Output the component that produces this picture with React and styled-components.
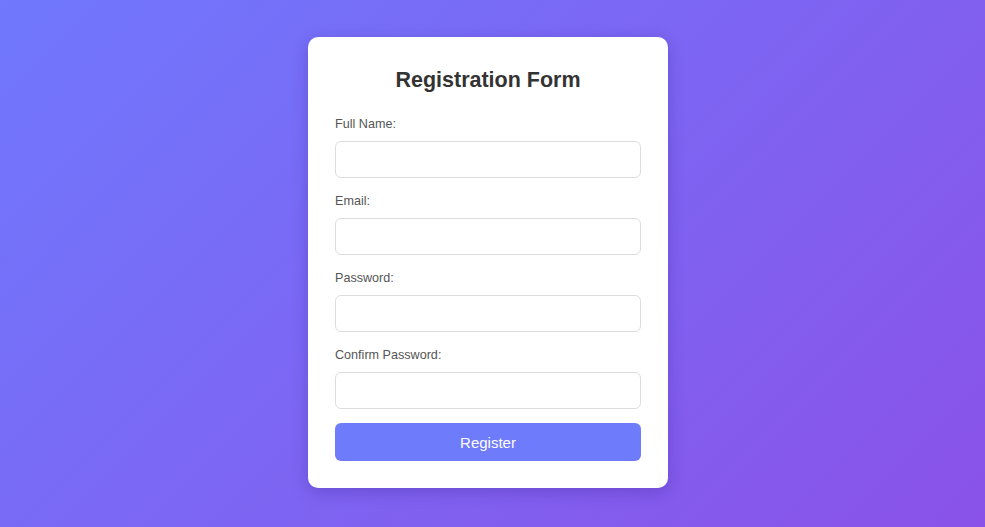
import styled, { createGlobalStyle } from "styled-components"

const GlobalStyle = createGlobalStyle`
  * {
    box-sizing: border-box;
  }
  body {
    margin: 0;
    font-family: "Liberation Sans", Arial, sans-serif;
  }
`

const Page = styled.div`
  min-height: 527px;
  background: linear-gradient(135deg, #7078fd 0%, #8a52e8 100%);
  display: flex;
  justify-content: center;
  padding: 37px 9px 0 0;
`

const Card = styled.form`
  width: 360px;
  height: 451px;
  background: #ffffff;
  border-radius: 10px;
  padding: 27px;
  box-shadow: 0 4px 16px rgba(40, 20, 120, 0.25);
  display: flex;
  flex-direction: column;
`

const Title = styled.h2`
  margin: 1px 0 20px;
  font-size: 21.5px;
  line-height: 30px;
  font-weight: 700;
  color: #333;
  text-align: center;
`

const Group = styled.div`
  display: flex;
  flex-direction: column;
  gap: 9px;
  margin-bottom: 14px;
`

const Label = styled.label`
  padding-top: 1px;
  font-size: 12.6px;
  line-height: 16px;
  color: #555;
`

const Input = styled.input`
  width: 100%;
  height: 37px;
  padding: 0 10px;
  border: 1px solid #dcdcdc;
  border-radius: 6px;
  font-size: 14px;
  font-family: inherit;
  outline: none;
  background: #fff;
`

const Button = styled.button`
  width: 100%;
  height: 38px;
  border: none;
  border-radius: 6px;
  background: #6e7bfb;
  color: #fff;
  font-size: 15px;
  font-family: inherit;
  cursor: pointer;
`

const fields = [
  { id: "name", label: "Full Name:", type: "text" },
  { id: "email", label: "Email:", type: "email" },
  { id: "password", label: "Password:", type: "password" },
  { id: "confirm", label: "Confirm Password:", type: "password" },
]

export default function App() {
  return <>
    <GlobalStyle />
    <Page>
      <Card onSubmit={e => e.preventDefault()}>
        <Title>Registration Form</Title>
        {fields.map(f => (
          <Group key={f.id}>
            <Label htmlFor={f.id}>{f.label}</Label>
            <Input id={f.id} type={f.type} />
          </Group>
        ))}
        <Button type="submit">Register</Button>
      </Card>
    </Page>
  </>
}
